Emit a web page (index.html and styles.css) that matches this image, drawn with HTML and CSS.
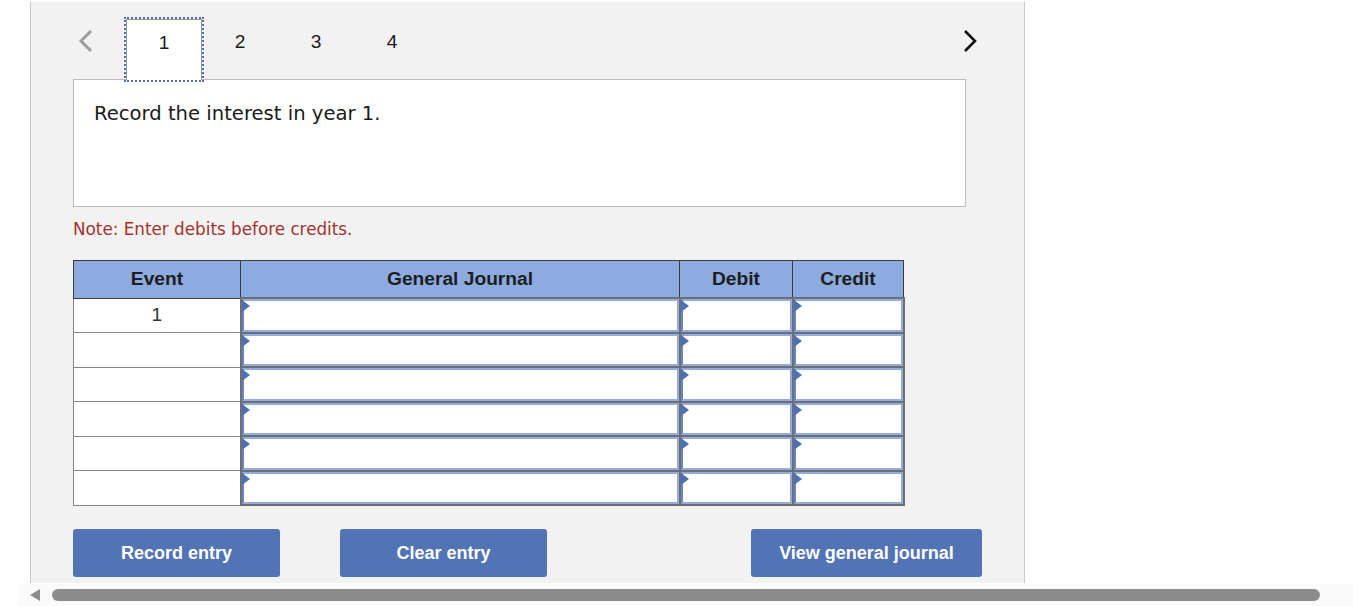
FILE: index.html
```html
<!DOCTYPE html>
<html>
<head>
<meta charset="utf-8">
<link rel="stylesheet" href="styles.css">
</head>
<body>
<div class="panel">
  <div class="tabs">
    <div class="prev"><svg width="16" height="24" viewBox="0 0 16 24"><polyline points="13,2 3,12 13,22" fill="none" stroke="#9d9d9d" stroke-width="3"/></svg></div>
    <div class="tab active">1</div>
    <div class="tab">2</div>
    <div class="tab">3</div>
    <div class="tab">4</div>
    <div class="next"><svg width="16" height="24" viewBox="0 0 16 24"><polyline points="3,2 13,12 3,22" fill="none" stroke="#111" stroke-width="2.6"/></svg></div>
  </div>
  <div class="question">Record the interest in year 1.</div>
  <div class="note">Note: Enter debits before credits.</div>
  <table class="journal">
    <colgroup><col class="c-ev"><col class="c-gj"><col class="c-dr"><col class="c-cr"></colgroup>
    <thead>
      <tr><th>Event</th><th>General Journal</th><th>Debit</th><th>Credit</th></tr>
    </thead>
    <tbody>
      <tr><td class="ev">1</td><td class="in"><div class="inp"><span class="flag"></span></div></td><td class="in"><div class="inp"><span class="flag"></span></div></td><td class="in"><div class="inp"><span class="flag"></span></div></td></tr>
      <tr><td class="ev"></td><td class="in"><div class="inp"><span class="flag"></span></div></td><td class="in"><div class="inp"><span class="flag"></span></div></td><td class="in"><div class="inp"><span class="flag"></span></div></td></tr>
      <tr><td class="ev"></td><td class="in"><div class="inp"><span class="flag"></span></div></td><td class="in"><div class="inp"><span class="flag"></span></div></td><td class="in"><div class="inp"><span class="flag"></span></div></td></tr>
      <tr><td class="ev"></td><td class="in"><div class="inp"><span class="flag"></span></div></td><td class="in"><div class="inp"><span class="flag"></span></div></td><td class="in"><div class="inp"><span class="flag"></span></div></td></tr>
      <tr><td class="ev"></td><td class="in"><div class="inp"><span class="flag"></span></div></td><td class="in"><div class="inp"><span class="flag"></span></div></td><td class="in"><div class="inp"><span class="flag"></span></div></td></tr>
      <tr><td class="ev"></td><td class="in"><div class="inp"><span class="flag"></span></div></td><td class="in"><div class="inp"><span class="flag"></span></div></td><td class="in"><div class="inp"><span class="flag"></span></div></td></tr>
    </tbody>
  </table>
  <div class="buttons">
    <button class="btn b-record">Record entry</button>
    <button class="btn b-clear">Clear entry</button>
    <button class="btn b-view">View general journal</button>
  </div>
</div>
<div class="hscroll">
  <span class="arrow"></span>
  <span class="thumb"></span>
</div>
</body>
</html>
```
FILE: styles.css
```css
html, body {
  margin: 0;
  padding: 0;
  background: #ffffff;
}
body {
  font-family: "Liberation Sans", Arial, sans-serif;
  color: #222;
}
.panel {
  margin: 2px 0 0 30px;
  width: 995px;
  height: 581px;
  box-sizing: border-box;
  border-left: 1px solid #c9c9c9;
  border-right: 1px solid #c9c9c9;
  background: #f2f2f2;
  padding: 17px 0 0 42px;
}
.tabs {
  display: flex;
  align-items: flex-start;
  width: 907px;
  height: 60px;
}
.prev {
  width: 53px;
  box-sizing: border-box;
  padding-left: 5px;
  margin-top: 10px;
  display: flex;
}
.next {
  margin-left: auto;
  margin-top: 10px;
  margin-right: 2px;
  display: flex;
}
.tab {
  width: 76px;
  height: 60px;
  box-sizing: border-box;
  padding-top: 12px;
  text-align: center;
  font-size: 19.2px;
  line-height: 22px;
  color: #1a1a1a;
}
.tab.active {
  position: relative;
  z-index: 1;
  height: 61px;
  background: #ffffff;
  border: 1px solid #9a9a9a;
  border-bottom: none;
  outline: 2px dotted #4f70b4;
}
.question {
  width: 893px;
  height: 128px;
  box-sizing: border-box;
  border: 1px solid #bdbdbd;
  background: #ffffff;
  padding: 22px 20px;
  font-family: "DejaVu Sans", Verdana, sans-serif;
  font-size: 19.6px;
  line-height: 23px;
  color: #1a1a1a;
}
.note {
  margin-top: 12px;
  font-family: "DejaVu Sans", Verdana, sans-serif;
  font-size: 16.8px;
  line-height: 20px;
  color: #a2342d;
}
.journal {
  margin-top: 21px;
  border-collapse: collapse;
  table-layout: fixed;
  width: 830px;
}
.c-ev { width: 167px; }
.c-gj { width: 439px; }
.c-dr { width: 113px; }
.c-cr { width: 111px; }
.journal th {
  height: 36px;
  padding: 0;
  background: #8dabdf;
  border: 1px solid #3a3a3a;
  font-size: 19.2px;
  font-weight: bold;
  color: #1e1e1e;
  text-align: center;
}
.journal td {
  padding: 0;
}
.journal td.ev {
  background: #ffffff;
  border: 1px solid #858585;
  text-align: center;
  font-size: 19.2px;
  color: #333;
}
.journal td.in {
  border: 2px solid #6d6f73;
  background: #ffffff;
}
.inp {
  position: relative;
  height: 32.5px;
  box-sizing: border-box;
  border: 2px solid #94acdd;
  border-left-color: #6685c4;
  background: #ffffff;
}
.flag {
  position: absolute;
  left: -2px;
  top: -1px;
  width: 0;
  height: 0;
  border-left: 8px solid #4d6fb3;
  border-top: 6px solid transparent;
  border-bottom: 6px solid transparent;
}
.buttons {
  display: flex;
  margin-top: 23px;
}
.btn {
  height: 48px;
  border: none;
  border-radius: 3px;
  background: #5274b4;
  color: #ffffff;
  font-family: "Liberation Sans", Arial, sans-serif;
  font-size: 18px;
  font-weight: bold;
  padding: 0;
}
.b-record { width: 207px; }
.b-clear { width: 207px; margin-left: 60px; }
.b-view { width: 231px; margin-left: 204px; }
.hscroll {
  margin: 1px 0 0 18px;
  height: 22px;
  background: #fafafa;
  display: flex;
  align-items: center;
  padding-left: 12px;
}
.arrow {
  width: 0;
  height: 0;
  border-right: 10px solid #8c8c8c;
  border-top: 6px solid transparent;
  border-bottom: 6px solid transparent;
}
.thumb {
  margin-left: 12px;
  width: 1268px;
  height: 12px;
  border-radius: 6px;
  background: #8c8c8c;
}
```
